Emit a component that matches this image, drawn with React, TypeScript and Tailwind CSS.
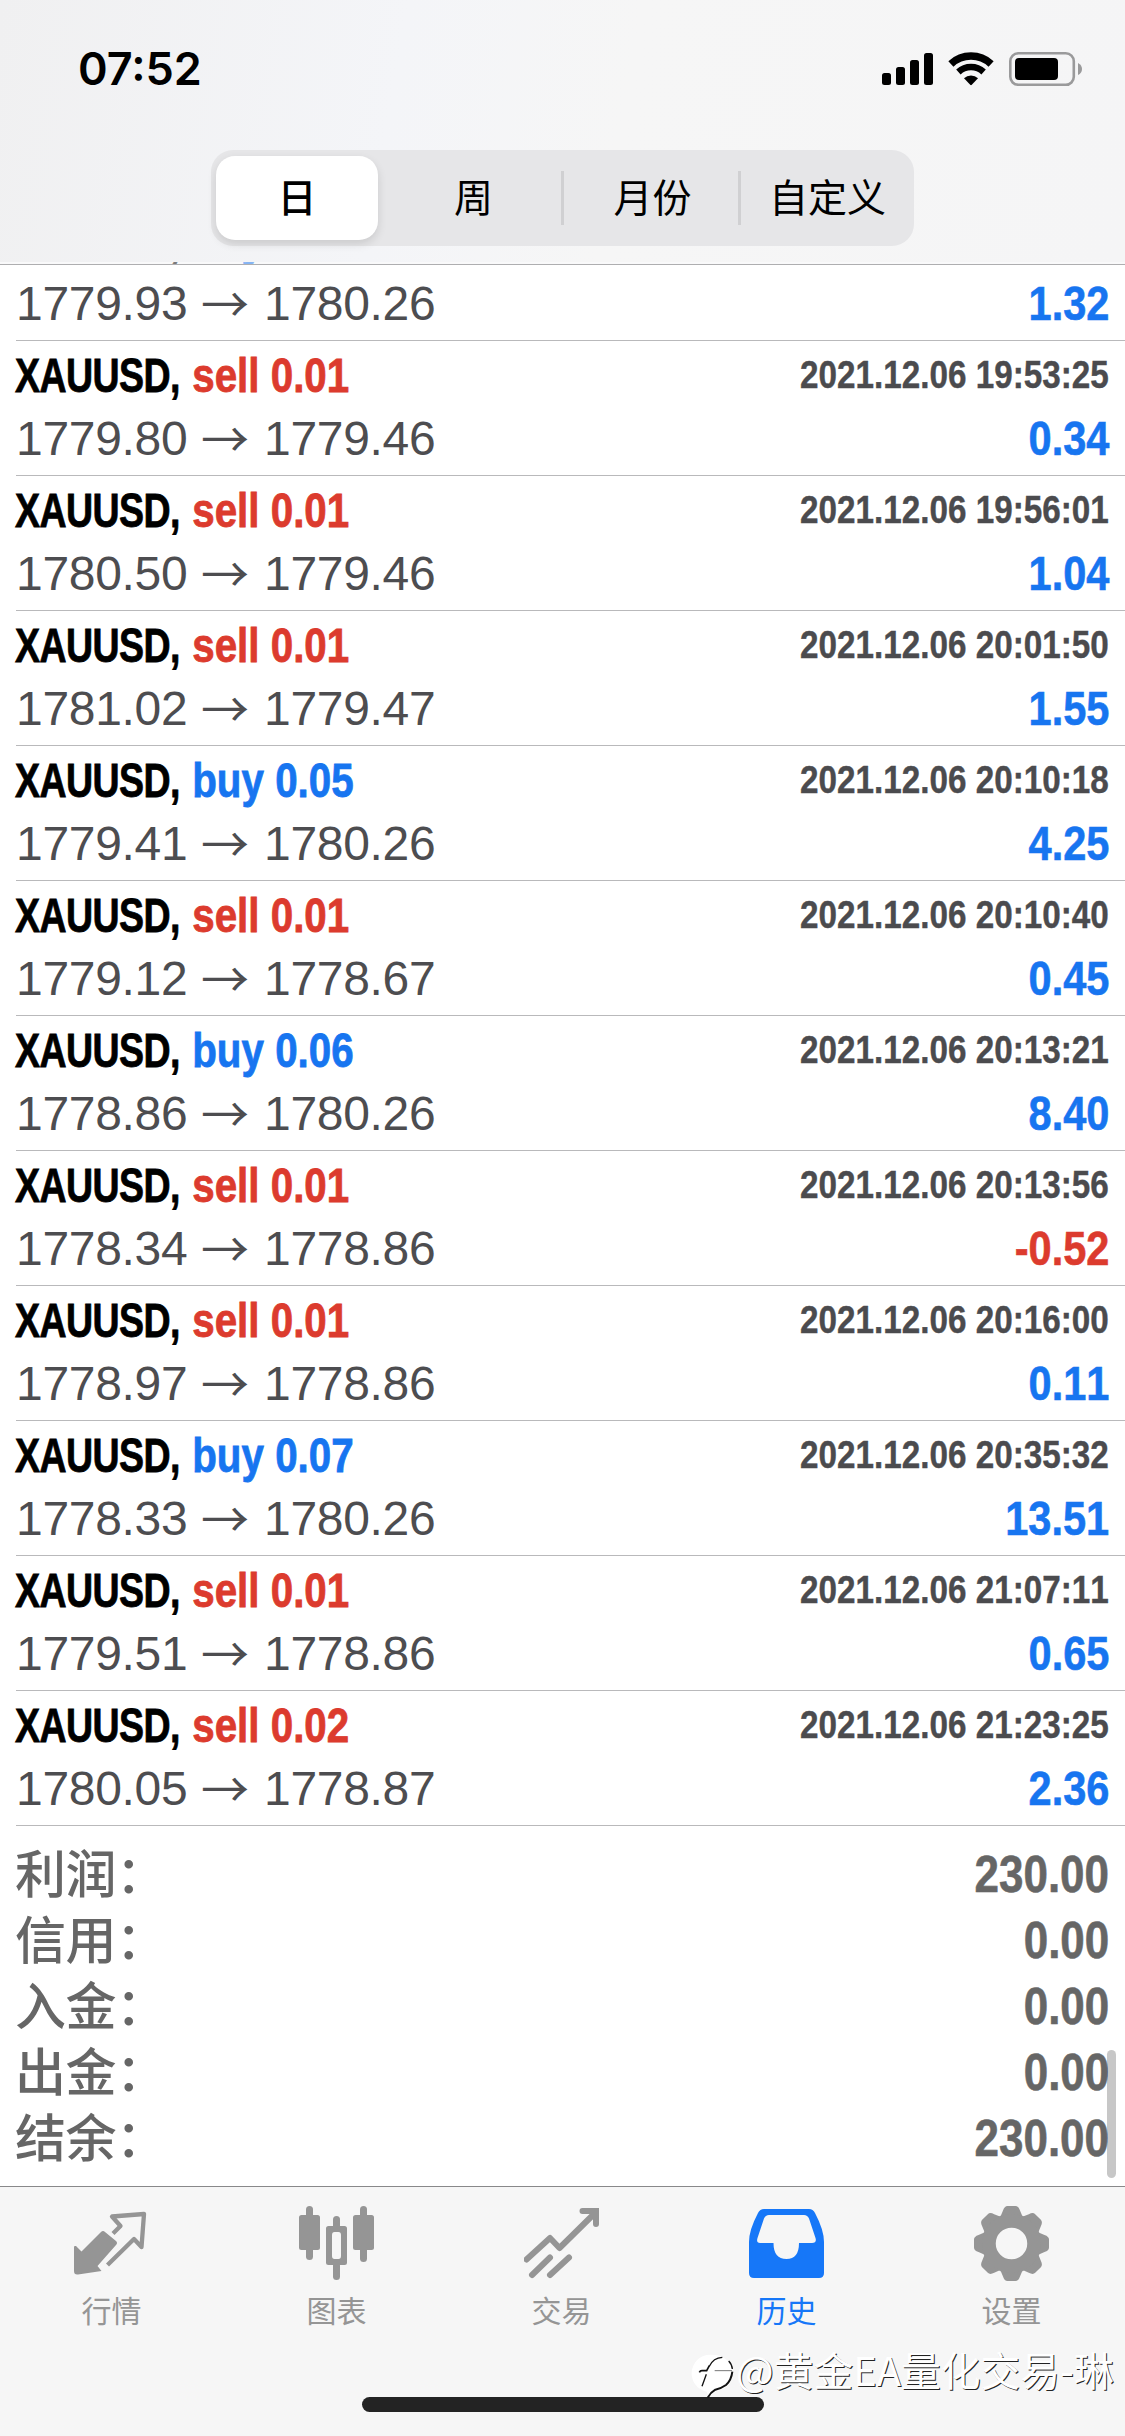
import React from "react";

type Deal = {
  side: "buy" | "sell";
  volume: string;
  time: string;
  open: string;
  close: string;
  profit: string;
};

const deals: Deal[] = [
  { side: "buy", volume: "0.04", time: "2021.12.06 19:50:12", open: "1779.93", close: "1780.26", profit: "1.32" },
  { side: "sell", volume: "0.01", time: "2021.12.06 19:53:25", open: "1779.80", close: "1779.46", profit: "0.34" },
  { side: "sell", volume: "0.01", time: "2021.12.06 19:56:01", open: "1780.50", close: "1779.46", profit: "1.04" },
  { side: "sell", volume: "0.01", time: "2021.12.06 20:01:50", open: "1781.02", close: "1779.47", profit: "1.55" },
  { side: "buy", volume: "0.05", time: "2021.12.06 20:10:18", open: "1779.41", close: "1780.26", profit: "4.25" },
  { side: "sell", volume: "0.01", time: "2021.12.06 20:10:40", open: "1779.12", close: "1778.67", profit: "0.45" },
  { side: "buy", volume: "0.06", time: "2021.12.06 20:13:21", open: "1778.86", close: "1780.26", profit: "8.40" },
  { side: "sell", volume: "0.01", time: "2021.12.06 20:13:56", open: "1778.34", close: "1778.86", profit: "-0.52" },
  { side: "sell", volume: "0.01", time: "2021.12.06 20:16:00", open: "1778.97", close: "1778.86", profit: "0.11" },
  { side: "buy", volume: "0.07", time: "2021.12.06 20:35:32", open: "1778.33", close: "1780.26", profit: "13.51" },
  { side: "sell", volume: "0.01", time: "2021.12.06 21:07:11", open: "1779.51", close: "1778.86", profit: "0.65" },
  { side: "sell", volume: "0.02", time: "2021.12.06 21:23:25", open: "1780.05", close: "1778.87", profit: "2.36" },
];

const totals = [
  { label: "利润：", value: "230.00" },
  { label: "信用：", value: "0.00" },
  { label: "入金：", value: "0.00" },
  { label: "出金：", value: "0.00" },
  { label: "结余：", value: "230.00" },
];

function StatusBar() {
  return (
    <div className="flex h-[150px] items-start justify-between pt-[45px] pr-[43px] pl-[78px]">
      <span className="font-['Inter',sans-serif] text-[45px] leading-[48px] font-semibold">07:52</span>
      <svg width="202" height="36" viewBox="880 51 202 36" className="mt-[6px]">
        <rect x="882" y="73" width="9" height="12" rx="2.5" />
        <rect x="896" y="67" width="9" height="18" rx="2.5" />
        <rect x="910" y="60" width="9" height="25" rx="2.5" />
        <rect x="924" y="53" width="9" height="32" rx="2.5" />
        <g fill="none" stroke="#000">
          <path d="M950.9 63.9 A29.5 29.5 0 0 1 991.1 63.9" strokeWidth="7.5" />
          <path d="M958.4 72 A18.5 18.5 0 0 1 983.6 72" strokeWidth="6.5" />
        </g>
        <path d="M964 78.3 A10 10 0 0 1 978 78.3 L971.8 84.8 Q971 85.6 970.2 84.8 Z" />
        <rect x="1010.3" y="53.3" width="63.5" height="31.5" rx="8" fill="none" stroke="#9a9a9b" strokeWidth="2.6" />
        <rect x="1015" y="58" width="43" height="22" rx="4" />
        <path d="M1078 63 Q1082 65 1082 69 Q1082 73 1078 75 Z" fill="#9a9a9b" />
      </svg>
    </div>
  );
}

function RangeTabs() {
  return (
    <div className="mx-auto flex h-24 w-[703px] items-center rounded-[22px] bg-[#e6e6e8] px-[5px] text-[39px] leading-none">
      <div className="flex h-[84px] w-[162px] items-center justify-center rounded-[19px] bg-white pb-[5px] font-medium shadow-[0_4px_10px_rgba(0,0,0,0.12)]">
        日
      </div>
      <div className="flex h-[54px] w-[186px] items-center justify-center border-r-3 border-[#d0d0d2] pb-[5px] pl-2">周</div>
      <div className="flex h-[54px] w-[177px] items-center justify-center border-r-3 border-[#d0d0d2] pb-[5px] pl-[3px]">月份</div>
      <div className="flex h-[54px] flex-1 items-center justify-center pb-[5px] pl-[5px]">自定义</div>
    </div>
  );
}

function DealRow({ deal }: { deal: Deal }) {
  return (
    // the first row is cut off just below the header's bottom line
    <li className="ml-4 h-[135px] border-b border-[#b9b9bb] pr-4 [font-kerning:none] first:[&>div:first-child]:[clip-path:inset(0_0_11px_0)]">
      <div className="flex h-[70px] items-start justify-between pt-[7px] font-['Liberation_Sans',sans-serif] font-bold">
        <p className="-ml-px flex origin-left scale-x-84 text-[48px] leading-[56px] [-webkit-text-stroke:0.8px]">
          <span className="w-[211px] origin-left scale-x-93 tracking-[-0.7px]">XAUUSD,</span>
          <span className={deal.side === "buy" ? "text-[#1775f0]" : "text-[#dc3b2e]"}>
            {deal.side} {deal.volume}
          </span>
        </p>
        <p className="origin-right scale-x-[.875] text-[38px] leading-[54px] text-[#4b4b4e] [-webkit-text-stroke:0.4px]">
          {deal.time}
        </p>
      </div>
      <div className="flex h-[56px] items-center justify-between font-['Liberation_Sans',sans-serif] text-[48px] leading-[54px]">
        <p className="flex text-[#4d4d50]">
          <span className="w-[185px] tracking-[-0.3px]">{deal.open}</span>
          <span className="-mt-[3px] w-[63px] font-['Noto_Sans_CJK_SC',sans-serif]">→</span>
          <span className="tracking-[-0.3px]">{deal.close}</span>
        </p>
        <p
          className={`origin-right scale-x-[.865] font-bold [-webkit-text-stroke:0.6px] ${
            deal.profit.startsWith("-") ? "text-[#dc3b2e]" : "text-[#1775f0]"
          }`}
        >
          {deal.profit}
        </p>
      </div>
    </li>
  );
}

function QuotesIcon() {
  return (
    <svg width="75" height="75" viewBox="0 0 75 75">
      <path
        d="M0.500 40 L2 40 L7.500 45.500 L27 26 Q29 24 31 26 L42 35 Q44 37 42 39 L23.500 60 L27.500 65 L4 68.500 Q0 69 0 65 V41 Z"
        fill="#959595"
      />
      <path d="M39 27.500 L46.500 20 L38 10.500 L70 8 L67.500 41 L60 33 L33.500 59" fill="none" stroke="#959595" strokeWidth="4.300" strokeLinejoin="round" />
    </svg>
  );
}

function ChartIcon() {
  return (
    <svg width="75" height="75" viewBox="0 0 75 75" fill="#959595">
      <rect x="7" y="0" width="7" height="54" rx="3.500" />
      <rect x="0" y="9" width="21" height="35" rx="2.500" />
      <rect x="61" y="0" width="7" height="56" rx="3.500" />
      <rect x="54" y="9" width="21" height="35" rx="2.500" />
      <rect x="34" y="10" width="7" height="14" rx="3.500" />
      <rect x="34" y="56" width="7" height="18" rx="3.500" />
      <path d="M29.500 20 H45.500 Q48 20 48 22.500 V56.500 Q48 59 45.500 59 H29.500 Q27 59 27 56.500 V22.500 Q27 20 29.500 20 Z M35.500 26 Q33 26 33 29 V50 Q33 53 35.500 53 H39.500 Q42 53 42 50 V29 Q42 26 39.500 26 Z" fillRule="evenodd" />
    </svg>
  );
}

function TradeIcon() {
  return (
    <svg width="75" height="75" viewBox="0 0 75 75" fill="none" stroke="#959595" strokeWidth="6" strokeLinecap="round">
      <path d="M2.500 53.500 L26 32 L35.500 42 L71 7" strokeLinejoin="round" />
      <path d="M58.500 5 H72 V18" strokeLinejoin="miter" />
      <path d="M8 69 L26 51.500 M26 69 L45 51.500" />
    </svg>
  );
}

function HistoryIcon() {
  return (
    <svg width="75" height="75" viewBox="0 0 75 75" fill="#1677f8">
      <path
        d="M15 3 H60 Q64 3 66 7 Q75 24 75 36 V67 Q75 72 70 72 H5 Q0 72 0 67 V36 Q0 24 9 7 Q11 3 15 3 Z M20 9 Q16.500 9 15 12.500 L8.500 32 Q7 37 11 37 H24.500 Q24.500 53 37.500 53 Q50 53 50 37 H63 Q68 37 66.500 32 L60 12.500 Q58.500 9 55 9 Z"
        fillRule="evenodd"
      />
    </svg>
  );
}

function SettingsIcon() {
  return (
    <svg width="75" height="75" viewBox="-37.500 -37.500 75 75">
      <g fill="#959595">
        {[0, 45, 90, 135, 180, 225, 270, 315].map((angle) => (
          <path
            key={angle}
            d="M-13 -25 Q-10 -28 -8.500 -33 Q-7 -37.500 -4 -37.500 H4 Q7 -37.500 8.500 -33 Q10 -28 13 -25 Z"
            transform={`rotate(${angle})`}
          />
        ))}
      </g>
      <circle r="22.500" fill="none" stroke="#959595" strokeWidth="13.500" />
    </svg>
  );
}

const tabs = [
  { label: "行情", icon: <QuotesIcon /> },
  { label: "图表", icon: <ChartIcon /> },
  { label: "交易", icon: <TradeIcon /> },
  { label: "历史", icon: <HistoryIcon />, active: true },
  { label: "设置", icon: <SettingsIcon /> },
];

function Watermark() {
  return (
    <div className="absolute top-[2342px] left-[690px] flex items-start">
      <svg width="46" height="56" viewBox="0 -9 138 168" className="shrink-0">
        <path d="M72 30 A56 56 0 0 1 128 88 Q126 128 80 138 L56 156 L50 140 A56 56 0 0 1 72 30 Z" fill="#fff" />
        <path d="M49 88 Q42 108 36 124 M58 64 Q70 38 97 37 M116 48 Q126 58 127 72" fill="none" stroke="#111" strokeWidth="4" />
        <path d="M28 82 Q31 76 38 77 H50 L58 62" fill="none" stroke="#111" strokeWidth="5" />
        <path d="M127 80 Q124 106 108 120 Q94 130 76 134 Q62 142 53 158" fill="none" stroke="#111" strokeWidth="6" />
        <path d="M74 77 H126" stroke="#777" strokeWidth="3" />
      </svg>
      <span className="text-[39.8px] leading-[54px] whitespace-nowrap text-white [text-shadow:1px_1px_0_#222]">
        @黄金EA量化交易-琳
      </span>
    </div>
  );
}

export default function App() {
  return (
    <div className="relative flex h-[2436px] w-[1125px] flex-col overflow-hidden bg-white font-['Noto_Sans_CJK_SC',sans-serif] text-black">
      <header className="relative z-10 h-[265px] shrink-0 border-b border-[#aeaeb0] bg-[#f3f4f6]/50 bg-[linear-gradient(100deg,#f0f0f1,#f4f5f8_35%,#f6f6f6_55%,#f5f5f6)] bg-[length:100%_262px] bg-no-repeat">
        <StatusBar />
        <RangeTabs />
      </header>

      <main className="-mt-[59px] flex-1">
        <ul>
          {deals.map((deal) => (
            <DealRow key={deal.time} deal={deal} />
          ))}
        </ul>
        <dl className="px-4 pt-[14px] text-[51px] text-[#666]">
          {totals.map((total) => (
            <div key={total.label} className="flex h-[66px] items-start justify-between">
              <dt className="-mt-0.5 -ml-px leading-[66px] font-medium tracking-[-0.5px]">{total.label}</dt>
              <dd className="origin-right scale-x-[.862] pt-1 font-['Liberation_Sans',sans-serif] leading-[62px] font-bold [-webkit-text-stroke:0.6px]">
                {total.value}
              </dd>
            </div>
          ))}
        </dl>
      </main>
      <div className="absolute top-[2050px] left-[1107px] h-32 w-[9px] rounded-full bg-black/22" />

      <nav className="flex h-[250px] shrink-0 flex-col border-t border-[#88888a] bg-[#f6f6f6]">
        <div className="flex h-[210px] -translate-x-px pt-[19px]">
          {tabs.map((tab) => (
            <div key={tab.label} className="flex flex-1 flex-col items-center">
              {tab.icon}
              <span className={`mt-1.5 text-[30px] leading-[44px] ${tab.active ? "text-[#1677f8]" : "text-[#959595]"}`}>
                {tab.label}
              </span>
            </div>
          ))}
        </div>
        <div className="mx-auto h-[15px] w-[402px] rounded-full bg-[#232323]" />
      </nav>
      <Watermark />
    </div>
  );
}
